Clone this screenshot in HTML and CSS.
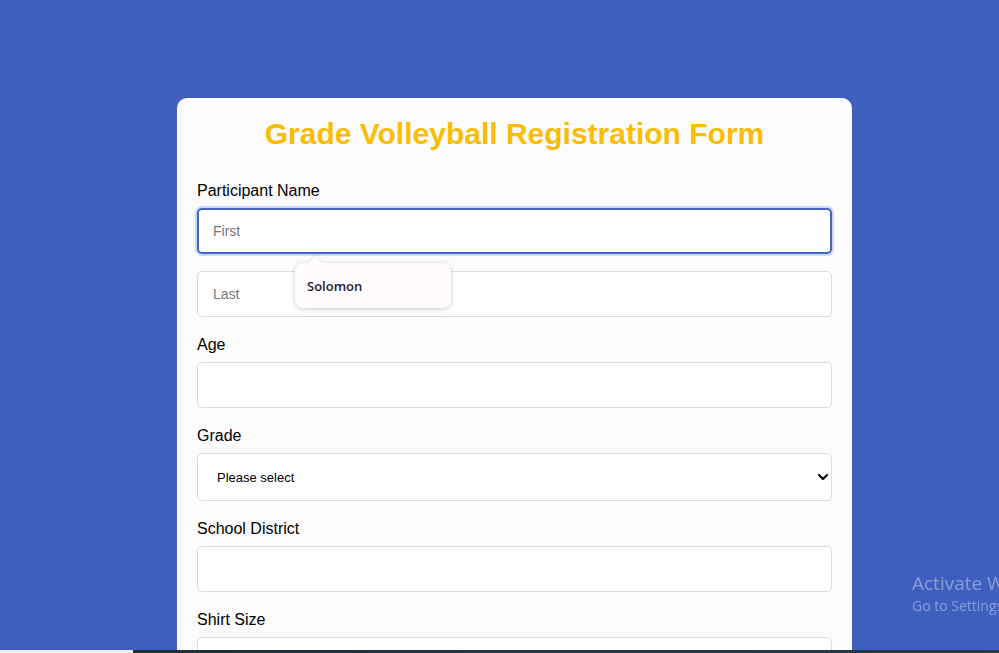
FILE: index.html
```html
<!DOCTYPE html>
<html lang="en">
<head>
<meta charset="utf-8">
<title>Grade Volleyball Registration Form</title>
<link rel="stylesheet" href="styles.css">
</head>
<body>
<main class="card">
  <h1 class="title">Grade Volleyball Registration Form</h1>
  <form class="form">
    <div class="field">
      <label class="label" for="first">Participant Name</label>
      <div class="name-wrap">
        <input class="input is-focused" id="first" type="text" placeholder="First">
        <div class="suggest"><span class="suggest-item">Solomon</span></div>
      </div>
      <input class="input" type="text" placeholder="Last">
    </div>
    <div class="field">
      <label class="label" for="age">Age</label>
      <input class="input" id="age" type="text">
    </div>
    <div class="field">
      <label class="label" for="grade">Grade</label>
      <div class="select-wrap">
        <select class="select" id="grade">
          <option>Please select</option>
        </select>
        <svg class="chev" width="12" height="8" viewBox="0 0 12 8"><path d="M2 2 6 6l4-4" fill="none" stroke="#111" stroke-width="2.4" stroke-linecap="round" stroke-linejoin="round"/></svg>
      </div>
    </div>
    <div class="field">
      <label class="label" for="district">School District</label>
      <input class="input" id="district" type="text">
    </div>
    <div class="field">
      <label class="label" for="shirt">Shirt Size</label>
      <input class="input" id="shirt" type="text">
    </div>
  </form>
</main>
<div class="watermark">
  <div class="wm-title">Activate Windows</div>
  <div class="wm-sub">Go to Settings to activate Windows.</div>
</div>
<div class="taskbar"><div class="tb-left"></div><div class="tb-right"></div></div>
</body>
</html>
```
FILE: styles.css
```css
html, body {
  margin: 0;
  padding: 0;
  height: 100%;
  overflow: hidden;
}
body {
  background: #3f5fbf;
  font-family: "Liberation Sans", Arial, sans-serif;
  color: #000;
}
.card {
  margin: 98px 0 0 177px;
  width: 675px;
  box-sizing: border-box;
  background: #fcfcfc;
  border-radius: 10px;
  padding: 18px 20px 40px;
}
.title {
  margin: 0 0 28px;
  text-align: center;
  color: #fbbc05;
  font-size: 30px;
  line-height: 36px;
  font-weight: bold;
}
.form {
  display: flex;
  flex-direction: column;
}
.field {
  display: flex;
  flex-direction: column;
}
.label {
  font-size: 16px;
  line-height: 18px;
  padding-top: 2px;
  margin-bottom: 8px;
}
.input, .select {
  display: block;
  box-sizing: border-box;
  width: 100%;
  height: 46px;
  margin: 0 0 17px;
  border: 1px solid #dcdcdc;
  border-radius: 5px;
  background: #fff;
  padding: 0 15px;
  font-family: "Liberation Sans", Arial, sans-serif;
  font-size: 14px;
  color: #000;
  outline: none;
}
.input::placeholder {
  color: #777;
}
.input.is-focused {
  border: 2px solid #4464c6;
  padding: 0 14px;
  box-shadow: 0 0 0 2px #cbd9f4;
}
.name-wrap {
  position: relative;
}
.suggest {
  position: absolute;
  left: 98px;
  top: 55px;
  width: 156px;
  height: 45px;
  box-sizing: border-box;
  background: #fffbff;
  border-radius: 8px;
  box-shadow: 0 1px 5px rgba(0, 0, 0, 0.22);
  display: flex;
  align-items: center;
  padding-left: 12px;
  z-index: 2;
}
.suggest::before {
  content: "";
  position: absolute;
  left: 15px;
  top: -5px;
  width: 10px;
  height: 10px;
  background: #fffbff;
  transform: rotate(45deg);
  box-shadow: -1px -1px 2px rgba(0, 0, 0, 0.08);
}
.suggest-item {
  position: relative;
  font-family: "Open Sans", "Noto Sans", sans-serif;
  font-weight: 600;
  font-size: 13px;
  color: #1f1f2a;
}
.select-wrap {
  position: relative;
}
.select {
  -webkit-appearance: none;
  appearance: none;
  height: 48px;
  padding: 0 19px;
  font-size: 13px;
}
.chev {
  position: absolute;
  right: 3px;
  top: 20px;
  pointer-events: none;
}
.watermark {
  position: fixed;
  left: 912px;
  top: 570px;
  white-space: nowrap;
  font-family: "Open Sans", "Noto Sans", sans-serif;
  color: rgba(255, 255, 255, 0.38);
}
.wm-title {
  font-size: 19px;
  line-height: 26px;
}
.wm-sub {
  font-size: 14px;
  line-height: 20px;
}
.taskbar {
  position: fixed;
  left: 0;
  right: 0;
  bottom: 0;
  height: 3px;
  display: flex;
}
.tb-left {
  width: 133px;
  background: #f0f0f0;
}
.tb-right {
  flex: 1;
  background: linear-gradient(90deg, #1d2f38, #263a4a);
}
```
